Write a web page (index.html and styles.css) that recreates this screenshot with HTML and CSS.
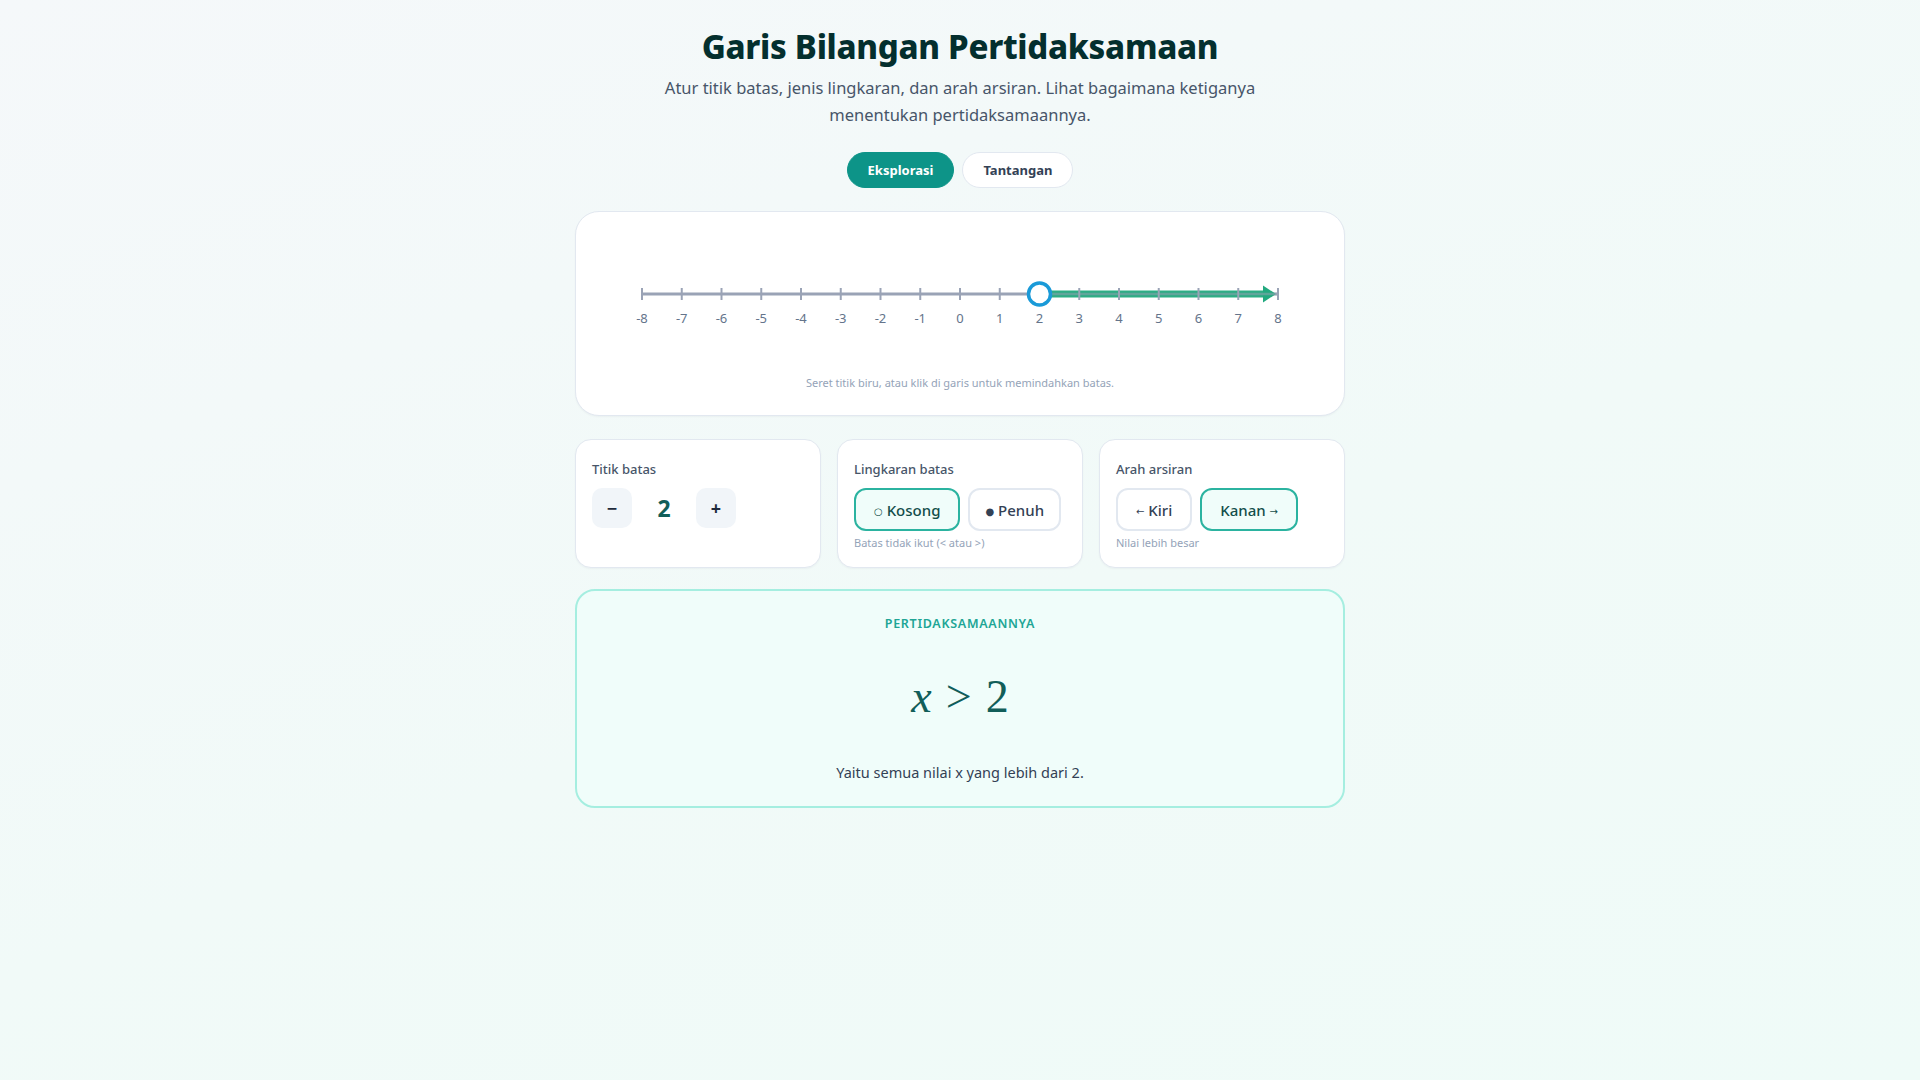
FILE: index.html
```html
<!DOCTYPE html>
<html lang="id">
<head>
<meta charset="utf-8">
<title>Garis Bilangan Pertidaksamaan</title>
<link rel="stylesheet" href="styles.css">
</head>
<body>
<main class="wrap">
  <h1 class="title">Garis Bilangan Pertidaksamaan</h1>
  <p class="subtitle">Atur titik batas, jenis lingkaran, dan arah arsiran. Lihat bagaimana ketiganya menentukan pertidaksamaannya.</p>

  <div class="tabs">
    <button class="tab tab-active">Eksplorasi</button>
    <button class="tab">Tantangan</button>
  </div>

  <section class="card line-card">
    <svg class="numline" viewBox="0 0 768 130" width="768" height="130">
      <line class="axis" x1="66" y1="60" x2="702" y2="60"/>
      <line class="shade" x1="463.5" y1="60" x2="690" y2="60"/>
      <polygon class="shade-head" points="687,51.5 700,60 687,68.5"/>
      <line class="axis-over" x1="463.5" y1="60" x2="702" y2="60"/>
      <g class="ticks">
        <line x1="66" y1="54" x2="66" y2="66"/>
        <line x1="105.75" y1="54" x2="105.75" y2="66"/>
        <line x1="145.5" y1="54" x2="145.5" y2="66"/>
        <line x1="185.25" y1="54" x2="185.25" y2="66"/>
        <line x1="225" y1="54" x2="225" y2="66"/>
        <line x1="264.75" y1="54" x2="264.75" y2="66"/>
        <line x1="304.5" y1="54" x2="304.5" y2="66"/>
        <line x1="344.25" y1="54" x2="344.25" y2="66"/>
        <line x1="384" y1="54" x2="384" y2="66"/>
        <line x1="423.75" y1="54" x2="423.75" y2="66"/>
        <line x1="463.5" y1="54" x2="463.5" y2="66"/>
        <line x1="503.25" y1="54" x2="503.25" y2="66"/>
        <line x1="543" y1="54" x2="543" y2="66"/>
        <line x1="582.75" y1="54" x2="582.75" y2="66"/>
        <line x1="622.5" y1="54" x2="622.5" y2="66"/>
        <line x1="662.25" y1="54" x2="662.25" y2="66"/>
        <line x1="702" y1="54" x2="702" y2="66"/>
      </g>
      <g class="labels">
        <text x="66" y="89">-8</text>
        <text x="105.75" y="89">-7</text>
        <text x="145.5" y="89">-6</text>
        <text x="185.25" y="89">-5</text>
        <text x="225" y="89">-4</text>
        <text x="264.75" y="89">-3</text>
        <text x="304.5" y="89">-2</text>
        <text x="344.25" y="89">-1</text>
        <text x="384" y="89">0</text>
        <text x="423.75" y="89">1</text>
        <text x="463.5" y="89">2</text>
        <text x="503.25" y="89">3</text>
        <text x="543" y="89">4</text>
        <text x="582.75" y="89">5</text>
        <text x="622.5" y="89">6</text>
        <text x="662.25" y="89">7</text>
        <text x="702" y="89">8</text>
      </g>
      <circle class="handle" cx="463.5" cy="60" r="11"/>
    </svg>
    <p class="hint-center">Seret titik biru, atau klik di garis untuk memindahkan batas.</p>
  </section>

  <div class="controls">
    <section class="card ctrl">
      <div class="ctrl-label">Titik batas</div>
      <div class="stepper">
        <button class="step-btn">&minus;</button>
        <span class="step-val">2</span>
        <button class="step-btn">+</button>
      </div>
    </section>
    <section class="card ctrl">
      <div class="ctrl-label">Lingkaran batas</div>
      <div class="opts">
        <button class="opt opt-on"><span class="glyph">○</span> Kosong</button>
        <button class="opt opt-narrow"><span class="glyph">●</span> Penuh</button>
      </div>
      <div class="ctrl-hint">Batas tidak ikut (&lt; atau &gt;)</div>
    </section>
    <section class="card ctrl">
      <div class="ctrl-label">Arah arsiran</div>
      <div class="opts">
        <button class="opt"><span class="glyph">←</span> Kiri</button>
        <button class="opt opt-on">Kanan <span class="glyph">→</span></button>
      </div>
      <div class="ctrl-hint">Nilai lebih besar</div>
    </section>
  </div>

  <section class="result">
    <div class="result-label">PERTIDAKSAMAANNYA</div>
    <div class="math"><span class="mi">x</span><span class="mo">&gt;</span><span class="mn">2</span></div>
    <p class="result-text">Yaitu semua nilai x yang lebih dari 2.</p>
  </section>
</main>
</body>
</html>
```

FILE: styles.css
```css
* { box-sizing: border-box; }

html, body { margin: 0; padding: 0; }

body {
  min-height: 100vh;
  font-family: "Noto Sans", "Open Sans", "DejaVu Sans", sans-serif;
  color: #334155;
  background: linear-gradient(160deg, #f5f8fa 0%, #f1faf8 55%, #effbf8 100%);
}

.wrap {
  width: 770px;
  margin: 0 auto;
  padding-top: 27px;
  display: flex;
  flex-direction: column;
  align-items: stretch;
}

.title {
  margin: 0;
  text-align: center;
  font-size: 33px;
  line-height: 40px;
  font-weight: 800;
  color: #042f2e;
  letter-spacing: -0.3px;
}

.subtitle {
  margin: 7px auto 0;
  max-width: 610px;
  text-align: center;
  font-size: 16.5px;
  line-height: 27px;
  color: #475569;
}

.tabs {
  margin-top: 24px;
  display: flex;
  justify-content: center;
  gap: 8px;
}

.tab {
  height: 36px;
  padding: 0 20px;
  border-radius: 999px;
  border: 1px solid #e2e8f0;
  background: #ffffff;
  color: #334155;
  font-family: inherit;
  font-size: 13px;
  font-weight: 700;
}

.tab-active {
  background: #0d9488;
  border-color: #0d9488;
  color: #ffffff;
}

.card {
  background: #ffffff;
  border: 1px solid #e2e8f0;
  box-shadow: 0 1px 2px rgba(15, 23, 42, 0.04);
}

.line-card {
  margin-top: 23px;
  border-radius: 24px;
  padding: 22px 0 24px;
  display: flex;
  flex-direction: column;
  align-items: center;
}

.numline { display: block; }

.axis { stroke: #9aa3b6; stroke-width: 3; }
.shade { stroke: #22a97f; stroke-width: 7; opacity: 0.95; }
.shade-head { fill: #22a97f; }
.axis-over { stroke: #9aa3b6; stroke-width: 2.5; opacity: 0.5; }
.ticks line { stroke: #9aa3b6; stroke-width: 2; }
.labels text {
  font-family: "Noto Sans", sans-serif;
  font-size: 13px;
  fill: #64748b;
  text-anchor: middle;
}
.handle { fill: #ffffff; stroke: #1a9ad8; stroke-width: 3.5; }

.hint-center {
  margin: 11px 0 0;
  font-size: 11px;
  line-height: 16px;
  color: #94a3b8;
  text-align: center;
}

.controls {
  margin-top: 23px;
  display: grid;
  grid-template-columns: repeat(3, 1fr);
  gap: 16px;
}

.ctrl {
  border-radius: 16px;
  padding: 19px 16px 16px;
}

.ctrl-label {
  font-size: 13px;
  line-height: 21px;
  font-weight: 500;
  color: #475569;
  margin-bottom: 8px;
}

.stepper {
  display: flex;
  align-items: center;
  gap: 8px;
}

.step-btn {
  width: 40px;
  height: 40px;
  border: none;
  border-radius: 10px;
  background: #f1f5f9;
  color: #1e293b;
  font-family: inherit;
  font-size: 18px;
  font-weight: 700;
  padding: 0;
}

.step-val {
  width: 48px;
  text-align: center;
  font-size: 23px;
  font-weight: 700;
  color: #115e59;
}

.opts {
  display: flex;
  gap: 8px;
}

.opt {
  height: 43px;
  padding: 0 18px;
  border-radius: 12px;
  border: 2px solid #e2e8f0;
  background: #ffffff;
  color: #334155;
  font-family: inherit;
  font-size: 15px;
  font-weight: 500;
}

.opt-narrow { padding: 0 15px; }

.opt-on {
  border-color: #2bb3a0;
  background: #f0fdfa;
  color: #134e4a;
}

.glyph {
  font-family: "DejaVu Sans", sans-serif;
  font-size: 10px;
  vertical-align: 1px;
}

.ctrl-hint {
  margin-top: 4px;
  font-size: 11px;
  line-height: 16px;
  color: #94a3b8;
}

.result {
  margin-top: 21px;
  border: 2px solid #a5eee0;
  background: #f0fdfa;
  border-radius: 20px;
  padding: 24px 24px 23px;
  text-align: center;
}

.result-label {
  font-size: 12.5px;
  line-height: 18px;
  font-weight: 600;
  letter-spacing: 0.7px;
  color: #20a595;
}

.math {
  margin-top: 33px;
  height: 60px;
  display: flex;
  justify-content: center;
  align-items: center;
  gap: 14px;
  font-family: "Liberation Serif", "DejaVu Serif", serif;
  font-size: 46px;
  color: #115e59;
}

.mi { font-style: italic; }

.result-text {
  margin: 35px 0 0;
  font-size: 14.5px;
  line-height: 22px;
  color: #334155;
}
```
